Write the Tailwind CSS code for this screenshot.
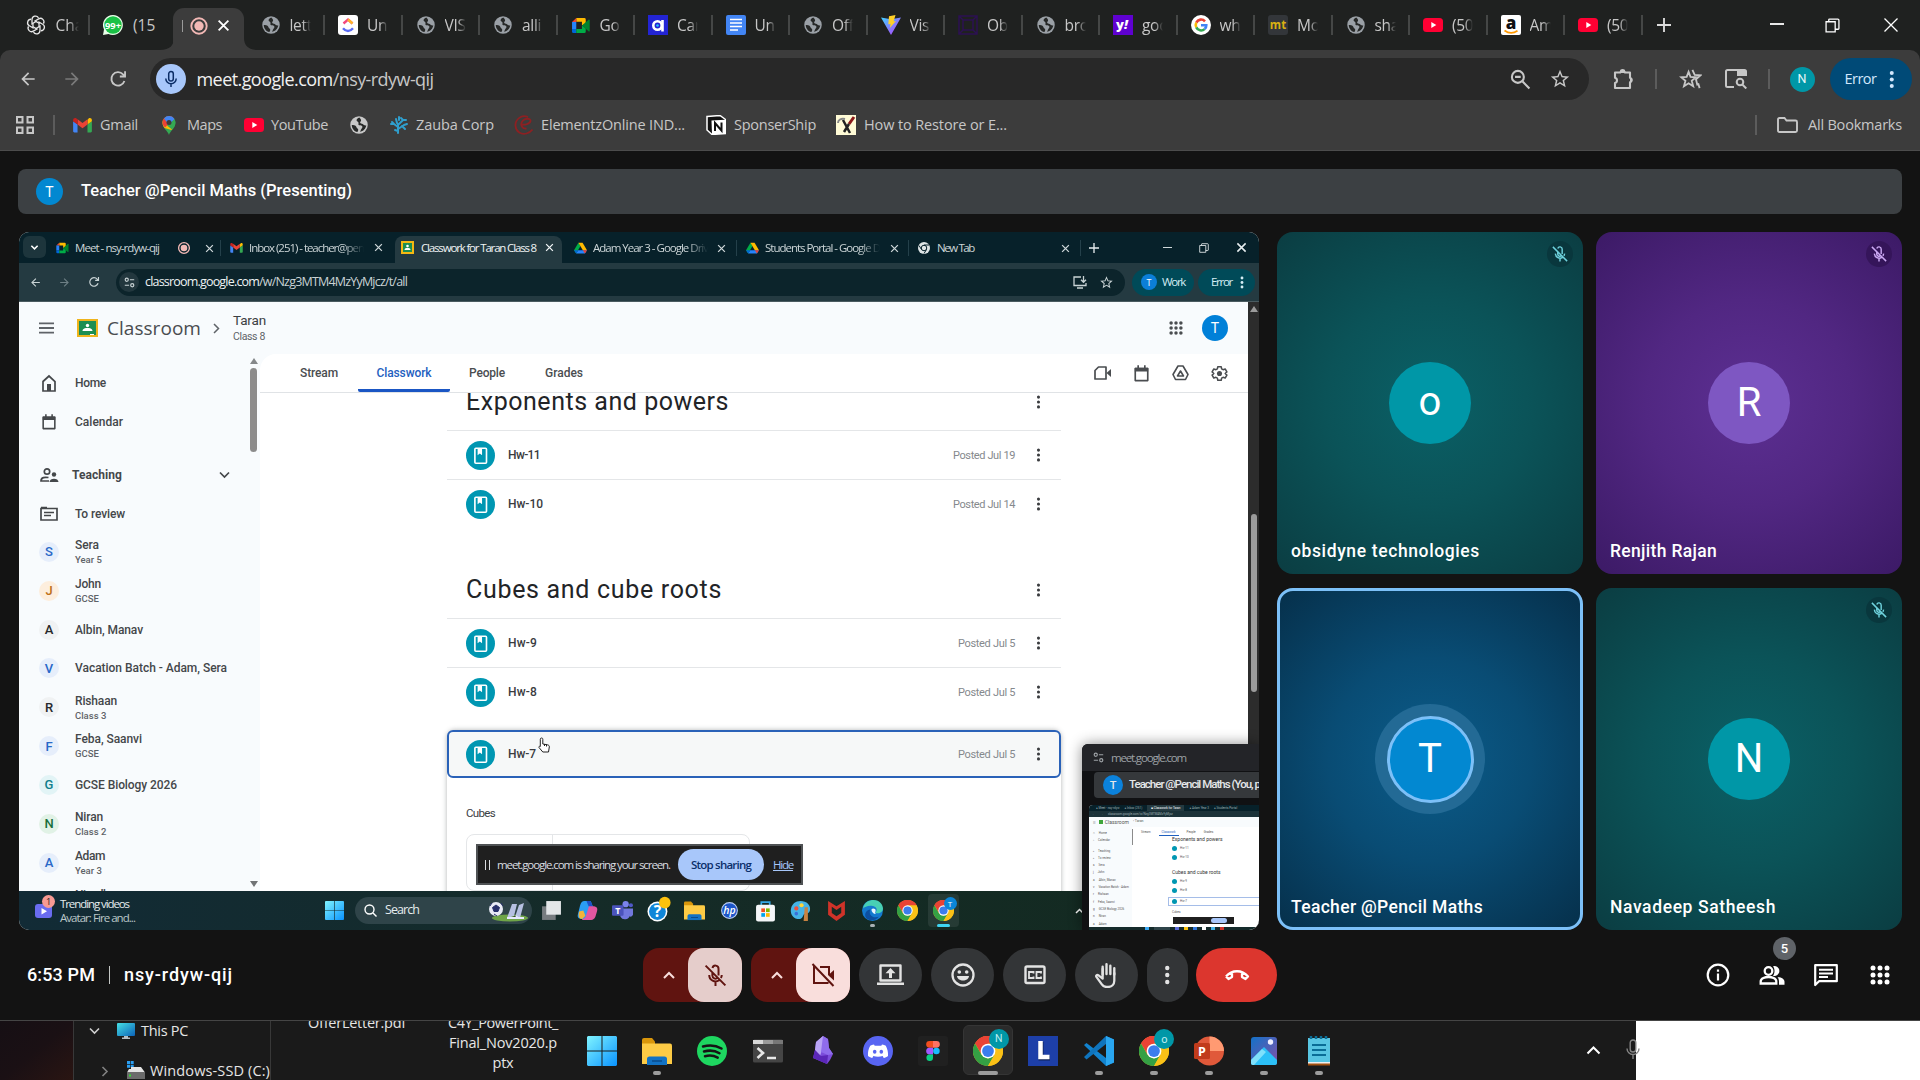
<!DOCTYPE html>
<html lang="en">
<head>
<meta charset="utf-8">
<title>Meet - nsy-rdyw-qij</title>
<script src="https://cdn.jsdelivr.net/npm/@tailwindcss/browser@4"></script>
</head>
<body class="w-[1920px] h-[1080px] overflow-hidden bg-[#131313] font-['Open_Sans','Noto_Sans',sans-serif] leading-none whitespace-nowrap">

<svg class="absolute w-0 h-0">
  <symbol id="globe" viewBox="0 0 24 24"><circle cx="12" cy="12" r="10.500" fill="currentColor"/><path d="M12.500 3c-2 .6-3.600 2-3.400 3.700.2 1.300 1.700 1.100 2.200 2.200.5 1.200-.5 2.300.4 3.100 1 .9 2.900.2 3.900 1.200 1.200 1.200.2 2.600-.8 3.500-.9.900-.7 2.400-1.800 3.500 4.200-.7 7.300-4 7.700-8-1.500.8-3-.3-4.300-1.300-1.200-.9-2.700-.3-3-1.600-.3-1.200 1.300-1.700 1.100-3C14.400 5 13.300 4.200 12.500 3zM3.300 12c1.500-.3 3.200-.2 4.500.8 1.300 1 1.100 2.500 2.400 3.300 1 .7 1.100 1.800.6 3.100l-.8 1.300C6.200 19.600 3.400 16.300 3.300 12z" fill="#262827"/></symbol>
  <symbol id="yt" viewBox="0 0 20 20"><rect y="3" width="20" height="14" rx="3.500" fill="#ff0033"/><path d="M8.300 7v6l5-3z" fill="#fff"/></symbol>
  <symbol id="gmail" viewBox="0 0 20 16"><path d="M1.300 15.500h3.400V7L0 3.500v10.700c0 .7.6 1.300 1.300 1.300z" fill="#4285f4"/><path d="M15.300 15.500h3.400c.7 0 1.300-.6 1.300-1.300V3.500L15.300 7z" fill="#34a853"/><path d="M15.300 2v5L20 3.500V2.200c0-1.900-2.100-2.700-3.500-1.600z" fill="#fbbc04"/><path d="M4.700 7V1.300L10 5.300l5.300-4V7L10 11z" fill="#ea4335"/><path d="M0 2.200v1.300L4.700 7V1.300L3.500.6C2.100-.5 0 .3 0 2.200z" fill="#c5221f"/></symbol>
  <symbol id="gmeet" viewBox="0 0 20 18"><path d="M5 1h8.500A1.500 1.500 0 0 1 15 2.500V7l-4 2V5H5z" fill="#ffba00"/><path d="M5 1v4.300H0.500z" fill="#ea4335"/><path d="M.5 5.300H5v7.400H.5z" fill="#2684fc"/><path d="M.5 12.700H5V17H2a1.500 1.500 0 0 1-1.500-1.500z" fill="#0066da"/><path d="M5 12.700h6V9l4 3v3.500a1.500 1.500 0 0 1-1.500 1.500H5z" fill="#00ac47"/><path d="M11 9l7-6.200c.6-.4 1.200 0 1.200.6v11.300c0 .6-.7.9-1.200.5z" fill="#00832d"/></symbol>
  <symbol id="drive" viewBox="0 0 22 20"><path d="M7.500 1 0 14l3.600 5.500L11 6.500z" fill="#00ac47"/><path d="M7.500 1h7L22 14h-7z" fill="#ffba00"/><path d="M3.600 19.500 7 13.800h15l-3.500 5.700z" fill="#2684fc"/><path d="M0 14h7l-3.400 5.500z" fill="#0066da"/><path d="M22 14h-7l3.500 5.500z" fill="#ea4335"/></symbol>
  <symbol id="chrome" viewBox="0 0 24 24"><circle cx="12" cy="12" r="12" fill="#fbc116"/><path d="M12 12 1.600 6A12 12 0 0 1 22.400 6z" fill="#ea4335"/><path d="M12 6h10.400A12 12 0 0 0 1.600 6L7 15z" fill="#ea4335"/><path d="M1.600 6A12 12 0 0 0 12 24l5.200-9L12 18 6.800 15z" fill="#34a044"/><path d="M22.400 6H12l5.200 9L12 24A12 12 0 0 0 22.400 6z" fill="#fbc116"/><circle cx="12" cy="12" r="5.900" fill="#fff"/><circle cx="12" cy="12" r="4.700" fill="#3b7ded"/></symbol>
  <symbol id="x" viewBox="0 0 12 12"><path d="M1.500 1.500l9 9M10.500 1.500l-9 9" fill="none" stroke="currentColor" stroke-width="1.700"/></symbol>
  <symbol id="plus" viewBox="0 0 12 12"><path d="M6 0v12M0 6h12" fill="none" stroke="currentColor" stroke-width="1.600"/></symbol>
  <symbol id="back" viewBox="0 0 24 24"><path d="M20 11H7.830l5.590-5.590L12 4l-8 8 8 8 1.410-1.410L7.830 13H20z" fill="currentColor"/></symbol>
  <symbol id="fwd" viewBox="0 0 24 24"><path d="M4 11h12.170l-5.590-5.590L12 4l8 8-8 8-1.410-1.410L16.170 13H4z" fill="currentColor"/></symbol>
  <symbol id="reload" viewBox="0 0 24 24"><path d="M19 14.200A7.300 7.300 0 1 1 17.500 7L19.500 9M19.700 3.500V9.300H14" fill="none" stroke="currentColor" stroke-width="2"/></symbol>
  <symbol id="star" viewBox="0 0 24 24"><path d="M22 9.240l-7.190-.62L12 2 9.190 8.630 2 9.240l5.460 4.730L5.820 21 12 17.270 18.180 21l-1.630-7.030L22 9.240zM12 15.400l-3.760 2.270 1-4.280-3.320-2.880 4.380-.38L12 6.100l1.710 4.040 4.380.38-3.320 2.880 1 4.280L12 15.400z" fill="currentColor"/></symbol>
  <symbol id="dots" viewBox="0 0 6 20"><g fill="currentColor"><circle cx="3" cy="3" r="2.200"/><circle cx="3" cy="10" r="2.200"/><circle cx="3" cy="17" r="2.200"/></g></symbol>
  <symbol id="grid9" viewBox="0 0 20 20"><g fill="currentColor"><circle cx="3" cy="3" r="2.500"/><circle cx="10" cy="3" r="2.500"/><circle cx="17" cy="3" r="2.500"/><circle cx="3" cy="10" r="2.500"/><circle cx="10" cy="10" r="2.500"/><circle cx="17" cy="10" r="2.500"/><circle cx="3" cy="17" r="2.500"/><circle cx="10" cy="17" r="2.500"/><circle cx="17" cy="17" r="2.500"/></g></symbol>
  <symbol id="rec" viewBox="0 0 20 20"><circle cx="10" cy="10" r="7.700" fill="none" stroke="#f2b8b5" stroke-width="1.900"/><circle cx="10" cy="10" r="4.700" fill="#f2b8b5"/></symbol>
  <symbol id="tune" viewBox="0 0 14 14"><g fill="none" stroke="currentColor" stroke-width="1.500"><circle cx="3.500" cy="3.500" r="2"/><path d="M7.500 3.500H13M1 10.500h5.500"/><circle cx="10.500" cy="10.500" r="2"/></g></symbol>
  <symbol id="cal" viewBox="0 0 18 20"><path d="M1.500 4h15v14.500h-15z" fill="none" stroke="currentColor" stroke-width="2" stroke-linejoin="round"/><path d="M1 3h16v4.500H1zM4 0h2v4H4zM12 0h2v4h-2z" fill="currentColor"/></symbol>
  <symbol id="book" viewBox="0 0 30 30"><circle cx="15" cy="15" r="15" fill="#0097b2"/><rect x="9.200" y="7.500" width="12" height="15.500" rx="1" fill="none" stroke="#fff" stroke-width="1.700"/><path d="M12 8v6.700l2.300-1.700 2.300 1.700V8z" fill="#fff"/></symbol>
  <linearGradient id="wg" x1="0" y1="0" x2="30" y2="30" gradientUnits="userSpaceOnUse"><stop stop-color="#80f4ff"/><stop offset="1" stop-color="#0a93ff"/></linearGradient>
  <symbol id="win" viewBox="0 0 30 30"><path d="M1 0h13.500v14.500H0V1zM15.500 0H29l1 1v13.500H15.500zM0 15.500h14.500V30H1l-1-1zM15.500 15.500H30V29l-1 1H15.500z" fill="url(#wg)"/></symbol>
  <symbol id="folder" viewBox="0 0 30 28"><path d="M0 3a2 2 0 0 1 2-2h8l3 3.500V9H0z" fill="#d9960b"/><path d="M0 6.500h28a2 2 0 0 1 2 2V27H0z" fill="#fdcb45"/><path d="M5 28v-6a2.500 2.500 0 0 1 2.500-2.500h15A2.500 2.500 0 0 1 25 22v6z" fill="#1272c4"/><path d="M10 24h10" stroke="#0a4c8c" stroke-width="1.500"/></symbol>
  <symbol id="micoff" viewBox="0 0 24 24"><g fill="none" stroke="currentColor" stroke-width="1.900"><path d="M9 9.500V12a3 3 0 0 0 5 2.200M14.900 12V5.500a2.950 2.950 0 0 0-5.800-.8M6 11.500a6 6 0 0 0 9.500 5M18 11.500a6 6 0 0 1-.8 3M12 17.700V22M2.500 2.500l19 19"/></g></symbol>
  <symbol id="restore" viewBox="0 0 14 14"><path d="M1 3.500h8.500V13H1zM3.500 3.500V1.700c0-.4.3-.7.7-.7H12c.6 0 1 .4 1 1v7.800c0 .4-.3.700-.7.700H9.500" fill="none" stroke="currentColor" stroke-width="1.200"/></symbol>
</svg>

<!-- Tab strip -->
<header class="bg-[#1f2120] h-[50px] flex text-[#c7c7c7] text-[15.500px]">
  <div class="flex flex-none w-[1642.500px] pl-[12.500px]" id="tabs">
    <div class="w-[77.500px] flex-none flex items-center pl-[13px] relative">
      <svg class="w-5 h-5 mr-[10px]" viewBox="0 0 20 20"><g fill="none" stroke="#e8e8e8" stroke-width="1.300"><path id="petal" d="M10 6.500 6 8.800V4.600a3.500 3.500 0 0 1 6.500-1.800"/><use href="#petal" transform="rotate(60 10 10)"/><use href="#petal" transform="rotate(120 10 10)"/><use href="#petal" transform="rotate(180 10 10)"/><use href="#petal" transform="rotate(240 10 10)"/><use href="#petal" transform="rotate(300 10 10)"/></g></svg>
      <span class="w-[23px] overflow-hidden leading-6 [mask-image:linear-gradient(90deg,#000_55%,transparent)]">Cha</span><i class="absolute right-0 top-[15px] w-0.5 h-5 bg-[#454746]"></i>
    </div>
    <div class="w-[77.500px] flex-none flex items-center pl-[13px]">
      <svg class="w-5 h-5 mr-[10px] overflow-visible" viewBox="0 0 20 20"><path d="M10 0a10 10 0 1 1-4.500 19L0 20l1-5.500A10 10 0 0 1 10 0z" fill="#e9ffe9"/><circle cx="10" cy="10" r="8.700" fill="#1ac146"/><text x="10" y="13.600" text-anchor="middle" font-size="9.500" font-weight="700" fill="#fff" textLength="16" lengthAdjust="spacingAndGlyphs">99+</text></svg>
      <span class="w-[24px] overflow-hidden leading-6">(15</span>
    </div>
    <div class="w-[80px] flex-none relative z-10">
      <div class="absolute left-[5.500px] top-2 w-[71px] h-[42px] bg-[#3c3c3c] rounded-t-[11px] flex items-center pb-1 pt-[1px] text-white">
        <i class="w-px h-3 bg-[#9a9a9a] ml-[9px] mt-[-3px]"></i><svg class="w-[20px] h-[20px] ml-[6px] mt-[-4px]"><use href="#rec"/></svg><svg class="w-[13px] h-[13px] ml-[8px] mt-[-4px]"><use href="#x"/></svg>
      </div>
      <svg class="absolute left-[-8px] bottom-0 w-[14px] h-3" viewBox="0 0 14 12"><path d="M0 12h14V0c0 7-4 12-14 12z" fill="#3c3c3c"/></svg>
      <svg class="absolute left-[76px] bottom-0 w-[14px] h-3" viewBox="0 0 14 12"><path d="M14 12H0V0c0 7 4 12 14 12z" fill="#3c3c3c"/></svg>
    </div>
  </div>
  <div class="flex items-center flex-1">
    <svg class="w-[14px] h-[14px] ml-[14px] text-[#dcdcdc]"><use href="#plus"/></svg>
    <i class="w-[14px] h-[1.500px] bg-[#e8e8e8] ml-[99px] -mt-[2px]"></i>
    <svg class="w-[15px] h-[15px] ml-[41px] text-white"><use href="#restore"/></svg>
    <svg class="ml-[44px] w-[14px] h-[14px] text-white" viewBox="0 0 14 14"><path d="M.5.5l13 13M13.500.5l-13 13" stroke="currentColor" stroke-width="1.300"/></svg>
  </div>
</header>

<!-- Toolbar -->
<div class="bg-[#1f2120]"><div class="bg-[#3c3c3c] h-[58px] flex items-center rounded-t-[10px] text-[#c7c7c7]">
  <svg class="w-5 h-5 ml-[18px]"><use href="#back"/></svg>
  <svg class="w-5 h-5 ml-[24px] text-[#7a7a7a]"><use href="#fwd"/></svg>
  <svg class="w-[22px] h-[22px] ml-[25px]"><use href="#reload"/></svg>
  <div class="ml-[20.500px] w-[1439px] h-[42px] rounded-full bg-[#282828] flex items-center pl-[6px] flex-none">
    <span class="w-[30px] h-[30px] rounded-full bg-[#a8c7fa] flex items-center justify-center"><svg class="w-[18px] h-[18px]" viewBox="0 0 18 18"><g fill="none" stroke="#0b2d66" stroke-width="1.500"><rect x="6.700" y="1.500" width="4.600" height="9.500" rx="2.300"/><path d="M3.800 8.500a5.200 5.200 0 0 0 10.400 0M9 13.500V17"/></g></svg></span>
    <span class="ml-[11px] text-[18px] text-[#c7c7c7]" data-w="237"><b class="font-normal text-[#f1f1f1]">meet.google.com</b>/nsy-rdyw-qij</span>
    <svg class="ml-auto w-[21px] h-[21px]" viewBox="0 0 20 20"><g fill="none" stroke="#c7c7c7" stroke-width="2"><circle cx="7.500" cy="7.500" r="5.700"/><path d="M12 12l6.500 6.500M4.800 7.500h5.400" /></g></svg>
    <svg class="w-[22px] h-[22px] ml-[18px] mr-[17.500px]"><use href="#star"/></svg>
  </div>
  <svg class="w-6 h-6 ml-[22px]" viewBox="0 0 24 24"><path d="M4 5.500h5.200a2.600 2.600 0 0 1 4.800 0h5v5.200a2.400 2.400 0 0 1 0 4.600v5.700H4v-5a2.700 2.700 0 0 0 0-5.200z" fill="none" stroke="currentColor" stroke-width="2.100" stroke-linejoin="round"/><path d="M9 4a2.600 2 0 0 1 5.200 0v2H9zM19 10.300a2.500 2.500 0 0 1 2.300 2.700 2.500 2.500 0 0 1-2.300 2.700z" fill="currentColor"/></svg>
  <i class="w-0.5 h-5 bg-[#5c5c5c] ml-[20px]"></i>
  <svg class="w-[23px] h-[23px] ml-[22px]" viewBox="0 0 24 24"><path d="M10 4l2 5.300 5.600.4-4.300 3.600 1.500 5.700L10 16l-4.800 3 1.500-5.700L2.400 9.700 8 9.300z" fill="none" stroke="currentColor" stroke-width="1.900"/><path d="M14 2l2.400 5.300 6 .4-4.700 4 1.600 6.600" fill="none" stroke="currentColor" stroke-width="1.900"/><path d="M20 16l1.500 5" stroke="currentColor" stroke-width="1.900"/></svg>
  <svg class="w-[22px] h-5 ml-[23px]" viewBox="0 0 22 20"><path d="M9 18H2.500A1.500 1.500 0 0 1 1 16.500v-14A1.500 1.500 0 0 1 2.500 1h17A1.500 1.500 0 0 1 21 2.500V7" fill="none" stroke="currentColor" stroke-width="2"/><path d="M12 1h9v6h-9z" fill="currentColor"/><circle cx="15" cy="13" r="3.300" fill="none" stroke="currentColor" stroke-width="2"/><path d="M17.300 15.500l4 4" stroke="currentColor" stroke-width="2"/></svg>
  <i class="w-0.5 h-5 bg-[#5c5c5c] ml-[21px]"></i>
  <span class="w-[25px] h-[25px] rounded-full bg-[#0097a7] text-[#e6f7f8] text-[12.500px] font-['Roboto'] flex items-center justify-center ml-[20px]">N</span>
  <div class="ml-[15px] w-[82px] h-[42px] rounded-full bg-[#004a77] text-[#d3e8fd] flex items-center pl-[15px] text-[14.500px]"><span data-w="32">Error</span><svg class="w-[5.500px] h-[19px] ml-[12.500px]"><use href="#dots"/></svg></div>
</div></div>

<!-- Bookmarks bar -->
<div class="bg-[#3c3c3c] h-[43px] pb-2 border-b border-[#4c4c4c] flex items-center text-[#c7c7c7] text-[14.500px]">
  <svg class="w-[18px] h-[18px] ml-[15.500px]" viewBox="0 0 18 18"><path d="M1 1h5.500v5.500H1zM11.500 1H17v5.500h-5.500zM1 11.500h5.500V17H1zM11.500 11.500H17V17h-5.500z" fill="none" stroke="currentColor" stroke-width="2"/></svg>
  <i class="w-0.5 h-5 bg-[#5c5c5c] ml-[19px] mr-[18.500px]"></i>
  <div class="w-[86px] flex items-center"><svg class="w-[19px] h-[15px] mr-2"><use href="#gmail"/></svg><span data-w="38">Gmail</span></div>
  <div class="w-[85px] flex items-center"><svg class="w-5 h-5 mr-2" viewBox="0 0 20 20"><path d="M10 20c-1-4-6.500-6.500-6.500-12.500A6.500 6.500 0 0 1 16.500 7.500C16.500 13.500 11 16 10 20z" fill="#34a853"/><path d="M5.500 13C4 11 3.500 9.500 3.500 7.500c0-1 .2-2 .7-3L14 12.500l-1.500 2.500z" fill="#fbbc04"/><path d="M3.500 7.500A6.500 6.500 0 0 1 15 3.500l-9 9C4.500 11 3.500 9.500 3.500 7.500z" fill="#ea4335"/><path d="M5 3.500A6.500 6.500 0 0 1 15.500 4L10 10z" fill="#4285f4"/><path d="M15.500 4.500c2.200 4.500-.5 7.500-2.500 10l-5 -4z" fill="#34a853"/><circle cx="10" cy="7.500" r="2.500" fill="#3c3c3c"/></svg><span data-w="35">Maps</span></div>
  <div class="w-[105px] flex items-center"><svg class="w-5 h-5 mr-[7px]"><use href="#yt"/></svg><span data-w="57">YouTube</span></div>
  <div class="w-[40px]"><svg class="w-5 h-5"><use href="#globe"/></svg></div>
  <div class="w-[125px] flex items-center"><svg class="w-5 h-5 mr-[7px]" viewBox="0 0 20 20"><path d="M9 18V9M9 12L5 9M9 14l6-4M10 9l4-4M8 8L7 4M5 9l-2-2M14 5l-2-2M15 10l3-1M6 15l3 1M5 9H2M14 5h3M10 5V2M13 11l3 3" stroke="#2f9fce" stroke-width="2" stroke-linecap="round" fill="none"/></svg><span data-w="78">Zauba Corp</span></div>
  <div class="w-[192px] flex items-center"><svg class="w-5 h-5 mr-[7px]" viewBox="0 0 20 20"><path d="M14 2C7-1 1 5 1.500 11c.5 6 6 9 11 7.500 2.500-.7 4.500-2 6-4M7 9.500c4 .5 9-.5 9.500-3.500.3-3-6-3-8 0-3 4 0 8 4 7.500" stroke="#8d2022" stroke-width="1.800" fill="none"/></svg><span data-w="144">ElementzOnline IND...</span></div>
  <div class="w-[130px] flex items-center"><svg class="w-5 h-5 mr-2" viewBox="0 0 20 20"><path d="M1 1.500 14 .5l5.500 4v14L6 19.500 1 15z" fill="#111" stroke="#fff" stroke-width="1.500"/><path d="M5.500 5.500 19 4.700v14L6 19.300z" fill="#fff"/><path d="M9 16V8l6.500 7.500V7.500" stroke="#111" stroke-width="2" fill="none"/></svg><span data-w="82">SponserShip</span></div>
  <div class="flex items-center"><svg class="w-5 h-5 mr-2" viewBox="0 0 20 20"><path d="M0 0h20v20H0z" fill="#fffbd6"/><path d="M18 2l-5 7" stroke="#8b1a1a" stroke-width="3"/><path d="M13 9l-5 8M7 5l7 13" stroke="#222" stroke-width="2.500"/><path d="M2 8c0-3 3-5 7-4" stroke="#888" stroke-width="2" fill="none"/></svg><span data-w="143">How to Restore or E...</span></div>
  <i class="w-0.5 h-5 bg-[#5c5c5c] ml-auto"></i>
  <svg class="w-[21px] h-4 ml-[20px] mr-[10px]" viewBox="0 0 21 16"><path d="M1 13.500v-11C1 1.500 1.500 1 2.500 1h5l2 2.500h9c1 0 1.500.5 1.500 1.500v8.500c0 1-.5 1.500-1.500 1.500h-16C1.500 15 1 14.500 1 13.500z" fill="none" stroke="currentColor" stroke-width="1.900"/></svg>
  <span data-w="94" class="mr-[18px]">All Bookmarks</span>
</div>

<!-- Meet -->
<main class="px-[18px] pt-[18px] h-[779px] font-['Roboto','Noto_Sans',sans-serif]">
  <div class="h-[45px] rounded-lg bg-[#3c4043] flex items-center pl-[18px] text-white font-medium text-[16.500px]">
    <span class="w-[27px] h-[27px] rounded-full bg-[#0288d1] flex items-center justify-center font-normal text-sm">T</span>
    <span class="ml-[18px]" data-w="271">Teacher @Pencil Maths (Presenting)</span>
  </div>

  <div class="mt-[18px] ml-px h-[698px] flex gap-[18px]">
    <!-- Shared screen -->
    <section class="relative w-[1240px] flex-none rounded-[10px] overflow-hidden bg-white flex flex-col font-['Open_Sans','Noto_Sans',sans-serif]">
      <div class="h-[31px] bg-[#07212a] flex text-[11.500px] text-[#ccd5d7] flex-none">
        <span class="w-[23px] h-[22px] mt-1 ml-1 rounded-md bg-[#1d353c] flex items-center justify-center"><svg class="w-[9px] h-[9px]" viewBox="0 0 10 10"><path d="M1.500 3l3.500 3.500L8.500 3" fill="none" stroke="#fff" stroke-width="1.700"/></svg></span>
        <div class="w-[175px] flex items-center pl-[10px] border-r border-[#24404a] h-4 mt-2"><svg class="w-[13px] h-[12px]"><use href="#gmeet"/></svg><span class="ml-[6px]" data-w="84">Meet - nsy-rdyw-qij</span><svg class="w-[14px] h-[14px] ml-[18px]"><use href="#rec"/></svg><svg class="w-[9px] h-[9px] ml-[14px]"><use href="#x"/></svg></div>
        <div class="w-[174px] flex items-center pl-[9px]"><svg class="w-[13px] h-[10px]"><use href="#gmail"/></svg><span class="ml-[6px] w-[115px] overflow-hidden leading-5 [mask-image:linear-gradient(90deg,#000_82%,transparent)]"><b class="font-normal inline-block" data-w="115">Inbox (251) - teacher@pen</b></span><svg class="w-[9px] h-[9px] ml-[10px]"><use href="#x"/></svg></div>
        <div class="w-[167px] bg-[#243a41] mt-1 rounded-t-lg flex items-center pl-[6px] pb-1 text-[#f0f4f5]"><svg class="w-[13px] h-[13px] flex-none" viewBox="0 0 13 13"><path d="M0 0h13v13H0z" fill="#f5b912"/><path d="M2 2h9v9H2z" fill="#1d8e51"/><circle cx="6.500" cy="5" r="1.300" fill="#fff"/><path d="M3.500 9c0-3 6-3 6 0z" fill="#fff"/></svg><span class="ml-[7px]" data-w="115">Classwork for Taran Class 8</span><svg class="w-[9px] h-[9px] ml-[9px]"><use href="#x"/></svg></div>
        <div class="w-[175px] flex items-center pl-[12px] border-r border-[#24404a] h-4 mt-2"><svg class="w-[13px] h-[12px]"><use href="#drive"/></svg><span class="ml-[6px] w-[115px] overflow-hidden leading-5 [mask-image:linear-gradient(90deg,#000_82%,transparent)]"><b class="font-normal inline-block" data-w="115">Adam Year 3 - Google Driv</b></span><svg class="w-[9px] h-[9px] ml-[9px]"><use href="#x"/></svg></div>
        <div class="w-[172px] flex items-center pl-[9px] border-r border-[#24404a] h-4 mt-2"><svg class="w-[13px] h-[12px]"><use href="#drive"/></svg><span class="ml-[6px] w-[115px] overflow-hidden leading-5 [mask-image:linear-gradient(90deg,#000_82%,transparent)]"><b class="font-normal inline-block" data-w="115">Students Portal - Google D</b></span><svg class="w-[9px] h-[9px] ml-[10px]"><use href="#x"/></svg></div>
        <div class="w-[172px] flex items-center pl-[9px] border-r border-[#24404a] h-4 mt-2"><svg class="w-[12px] h-[12px]" viewBox="0 0 24 24"><circle cx="12" cy="12" r="12" fill="#dfe5e6"/><circle cx="12" cy="12" r="5.500" fill="#dfe5e6" stroke="#07212a" stroke-width="2"/><path d="M12 6h10M7 15L2 7M17 15l-5 8" stroke="#07212a" stroke-width="2"/></svg><span class="ml-[7px]" data-w="37">New Tab</span><svg class="w-[9px] h-[9px] ml-[87px]"><use href="#x"/></svg></div>
        <div class="flex items-center text-[#e6ecee]"><svg class="w-[10px] h-[10px] ml-[8px]"><use href="#plus"/></svg><i class="w-[9px] h-px bg-[#cfd8da] ml-[64px]"></i><svg class="w-[10px] h-[10px] ml-[27px]"><use href="#restore"/></svg><svg class="w-[11px] h-[11px] ml-[27px]"><use href="#x"/></svg></div>
      </div>
      <div class="h-[39px] bg-[#243a41] border-b border-[#4a5b60] flex items-center text-[#c9d3d5] flex-none">
        <svg class="w-[13px] h-[13px] ml-[10px]"><use href="#back"/></svg><svg class="w-[13px] h-[13px] ml-[16px] text-[#6e8086]"><use href="#fwd"/></svg><svg class="w-[14px] h-[14px] ml-[16px]"><use href="#reload"/></svg>
        <div class="ml-[15px] w-[1009px] h-[27px] bg-[#0c242b] rounded-full flex items-center flex-none pl-[3px]"><span class="w-5 h-5 rounded-full bg-[#22373e] flex items-center justify-center"><svg class="w-[11px] h-[11px]"><use href="#tune"/></svg></span><span class="ml-[6px] text-[12.500px]" data-w="262"><b class="font-normal text-[#eef3f4]">classroom.google.com</b>/w/Nzg3MTM4MzYyMjcz/t/all</span>
          <svg class="ml-auto w-[14px] h-[13px]" viewBox="0 0 14 13"><path d="M8 1H1v8.500h12V7M4 12h6M10.500 0v6M8 3.800l2.500 2.500L13 3.800" fill="none" stroke="currentColor" stroke-width="1.300"/></svg><svg class="w-[15px] h-[15px] ml-[12px] mr-[11px]"><use href="#star"/></svg></div>
        <div class="ml-[7px] w-[62px] h-[27px] rounded-full bg-[#004a58] flex items-center pl-[9px] text-[11.500px] text-[#d5eef5]"><span class="w-4 h-4 rounded-full bg-[#0b7fd8] text-white text-[9px] flex items-center justify-center mr-[5px]">T</span><span data-w="23">Work</span></div>
        <div class="ml-[4px] w-[57px] h-[27px] rounded-full bg-[#004a58] flex items-center pl-[13px] text-[11.500px] text-[#d5eef5]"><span data-w="21">Error</span><svg class="w-[4px] h-[13px] ml-[8px]"><use href="#dots"/></svg></div>
      </div>

      <!-- Classroom page -->
      <div class="h-[589px] flex flex-none font-['Roboto','Noto_Sans',sans-serif] text-[#3c4043]">
        <div class="w-[1229px] bg-[#f8fbfd] overflow-hidden">
          <div class="h-[52px] flex items-center text-[#4a4d50]">
            <svg class="w-[15px] h-[12px] ml-[20px]" viewBox="0 0 15 12"><path d="M0 1.300h15M0 6h15M0 10.700h15" stroke="#5f6368" stroke-width="1.800"/></svg>
            <svg class="w-[21px] h-[18px] ml-[23px]" viewBox="0 0 21 18"><path d="M0 0h21v18H0z" fill="#efb41d"/><path d="M2 2h17v14H2z" fill="#1d8e51"/><circle cx="10.500" cy="6.500" r="1.700" fill="#fff"/><path d="M5.500 12c0-2.500 3-3 5-3s5 .5 5 3zM13 15h4v1h-4z" fill="#fff"/></svg>
            <span class="text-[19px] ml-[9px] font-['Open_Sans']" data-w="94">Classroom</span>
            <svg class="w-[7px] h-[11px] ml-[12px]" viewBox="0 0 7 11"><path d="M1 1l4.500 4.500L1 10" fill="none" stroke="#5f6368" stroke-width="1.500"/></svg>
            <div class="ml-[13px] flex flex-col gap-[5px]"><span class="text-[13.500px] text-[#3c4043] w-max" data-w="33">Taran</span><span class="text-[10.500px] text-[#5f6368] w-max" data-w="32">Class 8</span></div>
            <svg class="w-[14px] h-[14px] ml-auto text-[#4a4d50]"><use href="#grid9"/></svg><span class="ml-[19px] mr-[20px] w-[26px] h-[26px] rounded-full bg-[#0080d8] text-white text-[14px] flex items-center justify-center">T</span>
          </div>
          <div class="flex h-[537px]">
            <nav class="w-[228px] h-[537px] overflow-hidden pt-[9.500px] text-[12px] font-medium text-[#44474a]">
              <div class="h-[39px] flex items-center pl-[20px]"><svg class="w-5 h-[18px]" viewBox="0 0 20 18"><path d="M4 7.500 10 2l6 5.500V17H4z" fill="none" stroke="currentColor" stroke-width="1.700"/><path d="M8 10h4v7H8z" fill="currentColor"/></svg><span class="ml-4" data-w="31">Home</span></div>
              <div class="h-[39px] flex items-center pl-[23px]"><svg class="w-[14px] h-4"><use href="#cal"/></svg><span class="ml-[19px]" data-w="48">Calendar</span></div>
              <div class="h-[39px] mt-[14px] flex items-center pl-[20px]"><svg class="w-5 h-4" viewBox="0 0 20 16"><circle cx="8" cy="4.500" r="2.700" fill="none" stroke="currentColor" stroke-width="1.700"/><circle cx="15" cy="7.500" r="2.200" fill="currentColor"/><path d="M10 14H2c0-4 4-4 7.500-3.500" fill="none" stroke="currentColor" stroke-width="1.700"/><path d="M10.500 15c0-4.500 9-4.500 9 0z" fill="currentColor"/></svg><span class="ml-[13px] font-bold" data-w="50">Teaching</span><svg class="w-[11px] h-[8px] ml-[97px]" viewBox="0 0 11 8"><path d="M1 1.500l4.500 4.500L10 1.500" fill="none" stroke="currentColor" stroke-width="1.700"/></svg></div>
              <div class="h-[38px] flex items-center pl-[21px]"><svg class="w-[18px] h-[15px]" viewBox="0 0 18 15"><path d="M1 2.500h16V14H1zM1 1.500h6M4 6.500h10M4 9.500h7" fill="none" stroke="currentColor" stroke-width="1.700"/></svg><span class="ml-[17px]" data-w="50">To review</span></div>
              <div id="classes"></div>
            </nav>
            <div class="w-[13px] flex flex-col items-center py-[4px]"><svg class="w-[8px] h-[6px]" viewBox="0 0 8 6"><path d="M0 6l4-6 4 6z" fill="#85888a"/></svg><i class="w-[7px] h-[84px] mt-[4px] rounded-full bg-[#8b8b8b]"></i><svg class="w-[8px] h-[6px] mt-auto" viewBox="0 0 8 6"><path d="M0 0l4 6 4-6z" fill="#707375"/></svg></div>
            <div class="w-[988px] h-[537px] bg-white rounded-tl-[16px] overflow-hidden">
              <div class="h-[39px] border-b border-[#e0e3e6] flex text-[12px] font-medium text-[#4a4d50] relative">
                <div class="pl-[40px] w-[98px] flex items-center"><span data-w="38">Stream</span></div>
                <div class="w-[92px] flex items-center justify-center text-[#1f5fbf] border-b-[3px] border-[#1a56c4] pt-[3px] rounded-b-[2px]"><span data-w="55">Classwork</span></div>
                <div class="pl-[19px] w-[95px] flex items-center"><span data-w="36">People</span></div>
                <div class="flex items-center"><span data-w="38">Grades</span></div>
                <div class="ml-auto flex items-center text-[#4a4d50]">
                  <svg class="w-[17px] h-[14px]" viewBox="0 0 17 14"><path d="M4.500 1H12v12H1V4.500z" fill="none" stroke="currentColor" stroke-width="1.700" stroke-linejoin="round"/><path d="M12.500 7 17 3v8z" fill="currentColor"/></svg>
                  <svg class="w-[15px] h-[17px] ml-[23px]"><use href="#cal"/></svg>
                  <svg class="w-[17px] h-[16px] ml-[23px]" viewBox="0 0 17 16"><path d="M6 1h5l5 8.500-2.500 5h-10L1 9.500zM8.500 6l3 5h-6z" fill="none" stroke="currentColor" stroke-width="1.600" stroke-linejoin="round"/></svg>
                  <svg class="w-[17px] h-[17px] ml-[22px] mr-[20px]" viewBox="0 0 18 18"><path d="M7 1h4l.5 2.500 1.700 1L15.700 3.700l2 3.400-2 1.900 2 1.900-2 3.400-2.500-.8-1.700 1L11 17H7l-.5-2.500-1.700-1-2.500.8-2-3.400 2-1.900-2-1.900 2-3.400 2.500.8 1.700-1z" transform="translate(.9 .9) scale(.9)" fill="none" stroke="currentColor" stroke-width="1.800" stroke-linejoin="round"/><circle cx="9" cy="9" r="2.700" fill="currentColor"/></svg>
                </div>
              </div>
              <div class="h-[498px] overflow-hidden">
                <div class="w-[614px] ml-[187px] -mt-[20px] text-[12px] font-medium">
                  <div class="h-[58px] border-b border-[#e4e6e8] flex items-center pl-[19px] pr-[20px] justify-between text-[#3a3c3f]"><span class="text-[25px] font-normal text-[#222427]" data-w="263">Exponents and powers</span><svg class="w-[5px] h-[14px]"><use href="#dots"/></svg></div>
                  <div class="h-[49px] border-b border-[#e4e6e8] flex items-center pl-[19px] pr-[20px] text-[#3a3c3f]"><svg class="w-[29px] h-[29px]"><use href="#book"/></svg><span class="ml-[13px]" data-w="32">Hw-11</span><span class="ml-auto font-normal text-[11px] text-[#85898d]" data-w="62">Posted Jul 19</span><svg class="w-[5px] h-[14px] ml-[21px]"><use href="#dots"/></svg></div>
                  <div class="h-[48px] flex items-center pl-[19px] pr-[20px] text-[#3a3c3f]"><svg class="w-[29px] h-[29px]"><use href="#book"/></svg><span class="ml-[13px]" data-w="35">Hw-10</span><span class="ml-auto font-normal text-[11px] text-[#85898d]" data-w="62">Posted Jul 14</span><svg class="w-[5px] h-[14px] ml-[21px]"><use href="#dots"/></svg></div>
                  <div class="h-[58px] mt-[33px] border-b border-[#e4e6e8] flex items-center pl-[19px] pr-[20px] justify-between text-[#3a3c3f]"><span class="text-[25px] font-normal text-[#222427]" data-w="256">Cubes and cube roots</span><svg class="w-[5px] h-[14px]"><use href="#dots"/></svg></div>
                  <div class="h-[49px] border-b border-[#e4e6e8] flex items-center pl-[19px] pr-[20px] text-[#3a3c3f]"><svg class="w-[29px] h-[29px]"><use href="#book"/></svg><span class="ml-[13px]" data-w="29">Hw-9</span><span class="ml-auto font-normal text-[11px] text-[#85898d]" data-w="57">Posted Jul 5</span><svg class="w-[5px] h-[14px] ml-[21px]"><use href="#dots"/></svg></div>
                  <div class="h-[48px] flex items-center pl-[19px] pr-[20px] text-[#3a3c3f]"><svg class="w-[29px] h-[29px]"><use href="#book"/></svg><span class="ml-[13px]" data-w="29">Hw-8</span><span class="ml-auto font-normal text-[11px] text-[#85898d]" data-w="57">Posted Jul 5</span><svg class="w-[5px] h-[14px] ml-[21px]"><use href="#dots"/></svg></div>
                  <div class="mt-[14px] h-[200px] rounded-lg shadow-[0_0_5px_rgba(60,64,67,0.4)]">
                    <div class="h-[48px] rounded-md border-2 border-[#2a62b8] bg-[#f6f8f8] flex items-center pl-[17px] pr-[18px] text-[#3a3c3f]"><svg class="w-[29px] h-[29px]"><use href="#book"/></svg><span class="ml-[13px]" data-w="28">Hw-7</span><span class="ml-auto font-normal text-[11px] text-[#85898d]" data-w="57">Posted Jul 5</span><svg class="w-[5px] h-[14px] ml-[21px]"><use href="#dots"/></svg></div>
                    <div class="pl-[19px] pt-[27px] leading-4 font-normal text-[11.500px]"><span data-w="29" class="inline-block">Cubes</span><div class="mt-[13px] w-[284px] h-[57px] rounded-lg border border-[#e4e6e8]"><i class="block ml-[85px] h-full w-px bg-[#e4e6e8]"></i></div></div>
                  </div>
                </div>
              </div>
            </div>
          </div>
        </div>
        <div class="w-[11px] bg-[#2c2c2c] flex flex-col items-center"><svg class="w-[8px] h-[6px] mt-[4px]" viewBox="0 0 8 6"><path d="M0 6l4-6 4 6z" fill="#9b9b9b"/></svg><i class="mt-[202px] w-[6px] h-[178px] rounded-full bg-[#9b9b9b]"></i></div>
      </div>

      <!-- Pointer -->
      <svg class="absolute left-[519px] top-[505px] w-[12px] h-[16px]" viewBox="0 0 12 16"><path d="M3.500 1c1 0 1.300.6 1.300 1.300V7l4.700.8c1.300.3 2 1 1.800 2.200L10.500 15H4.800L1 10.500c-.5-.8.5-1.600 1.300-1V2.300C2.300 1.600 2.700 1 3.500 1zM6.500 7v2M8.500 7.500v2" fill="#fff" stroke="#222" stroke-width="1"/></svg>

      <!-- Sharing notice -->
      <div class="absolute left-[457px] top-[612px] w-[327px] h-[41px] bg-[#1f1f1f] border-2 border-[#4f5254] flex items-center text-[11.500px] text-[#dadde0]">
        <i class="ml-[7px] w-[5px] h-[10px] border-x-[1.500px] border-[#dadde0]"></i>
        <span class="ml-[7px]" data-w="173">meet.google.com is sharing your screen.</span>
        <span class="ml-[8px] w-[86px] h-[31px] rounded-full bg-[#a8c7fa] text-[#0b2f6b] flex items-center justify-center font-semibold"><b class="font-semibold" data-w="60">Stop sharing</b></span>
        <span class="ml-[9px] underline text-[#a8c7fa]" data-w="20">Hide</span>
      </div>

      <!-- Shared taskbar -->
      <div class="h-[39px] flex-none bg-linear-to-r from-[#122b36] via-[#152b27] to-[#132a20] flex items-center text-[11.500px] text-[#e6ecee]">
        <div class="w-[22px] ml-[16px] relative"><svg class="w-[17px] h-[14px]" viewBox="0 0 17 14"><rect width="17" height="14" rx="3" fill="#6a6cf0"/><path d="M6.500 4v6.500L12 7.200z" fill="#fff"/></svg><span class="absolute left-[7px] -top-[9px] w-[13px] h-[13px] rounded-full bg-[#f79a93] text-[9px] text-[#222] flex items-center justify-center">1</span></div>
        <div class="ml-[3px] w-[260px] flex flex-col gap-[2px]"><span class="w-max" data-w="69">Trending videos</span><span class="w-max text-[#bcc7c9]" data-w="75">Avatar: Fire and...</span></div>
        <svg class="w-[19px] h-[19px] ml-[5px]"><use href="#win"/></svg>
        <div class="ml-[11px] w-[177px] h-[27px] rounded-full bg-[#2f4449] flex items-center pl-[9px] text-[12.500px]"><svg class="w-[13px] h-[13px]" viewBox="0 0 13 13"><circle cx="5.500" cy="5.500" r="4.500" fill="none" stroke="#fff" stroke-width="1.400"/><path d="M9 9l3.500 3.500" stroke="#fff" stroke-width="1.400"/></svg><span class="ml-[8px]" data-w="34">Search</span>
          <svg class="ml-auto mr-[4px] w-[40px] h-[22px]" viewBox="0 0 40 22"><ellipse cx="22" cy="18" rx="18" ry="3.500" fill="#6fa548"/><circle cx="8" cy="9" r="7" fill="#e8eaf6"/><path d="M8 5l3.500 2.500-1.500 4H6L4.500 7.500zM2 6l2-3M13 3l2 3M6 14l3 2" fill="#27306b" stroke="#27306b"/><path d="M19 18l5-14 5 0-3 12zM27 17l4-12 5-2-4 15z" fill="#b7c0e2"/><path d="M19 18h9l1-2M28 18h8" stroke="#e7eaff" stroke-width="2"/></svg></div>
        <div class="ml-[2px] flex items-center [&>div]:w-[35.600px] [&>div]:h-[39px] [&>div]:flex [&>div]:items-center [&>div]:justify-center [&_svg]:w-[21px] [&_svg]:h-[21px] [&_svg]:overflow-visible">
          <div><svg viewBox="0 0 20 20"><path d="M1 6h13v13H1z" fill="#777c80"/><path d="M5 1h14v13H5z" fill="#e3e6e8"/></svg></div>
          <div><svg viewBox="0 0 20 20"><path d="M7 1h6l2 5-4 12H5c-4 0-5-2-4-5l2-8c1-3 2-4 4-4z" fill="#2a9df4"/><path d="M5 18c2 0 3-1 3.500-3L12 4l3 2c4 0 5 2 4 5l-1.500 5c-1 2-2 3-4 3H5z" fill="#e356a0"/><path d="M2 11l4-1 2 5-3 3c-3 0-4-2-3-7z" fill="#f3b33a"/><path d="M9 1l4 0 2 5h-4z" fill="#1e50c8"/></svg></div>
          <div><svg viewBox="0 0 20 20"><circle cx="13" cy="4" r="3" fill="#7b83eb"/><circle cx="18" cy="5" r="2" fill="#5059c9"/><path d="M8 8h9v7a5 5 0 0 1-9 1zM17 8h3v6a3 3 0 0 1-3 2z" fill="#7178dd"/><rect y="5" width="11" height="10" rx="1" fill="#4b53bc"/><text x="5.500" y="13" text-anchor="middle" font-size="8.500" font-weight="700" fill="#fff">T</text></svg></div>
          <div><svg viewBox="0 0 20 20"><circle cx="9" cy="11" r="9.500" fill="#fff"/><circle cx="9" cy="11" r="8" fill="#0f86d8"/><text x="9" y="16.500" text-anchor="middle" font-size="15" font-weight="700" fill="#fff">?</text><circle cx="16" cy="2.500" r="5.500" fill="#fcc20e"/></svg></div>
          <div><svg viewBox="0 0 30 28"><use href="#folder"/></svg></div>
          <div><svg viewBox="0 0 20 20"><circle cx="10" cy="10" r="7.500" fill="#1c55c8" stroke="#b9cdf5"/><text x="10" y="13.500" text-anchor="middle" font-size="10" font-style="italic" font-weight="600" fill="#fff">hp</text></svg></div>
          <div><svg viewBox="0 0 20 20"><path d="M6 5V2h8v3" fill="none" stroke="#33a8e8" stroke-width="1.600"/><rect x="1" y="4.500" width="18" height="16" rx="2" fill="#f4f6f8"/><path d="M6 8h3.500v3.500H6z" fill="#f25022"/><path d="M10.500 8H14v3.500h-3.500z" fill="#7fba00"/><path d="M6 12.500h3.500V16H6z" fill="#00a4ef"/><path d="M10.500 12.500H14V16h-3.500z" fill="#ffb900"/></svg></div>
          <div><svg viewBox="0 0 20 20"><path d="M10 1c6 0 10 4 9 9-1 4-5 2-6 4s-2 5-6 4C2 17 0 12 1 8s4-7 9-7z" fill="#45b3e6"/><circle cx="6" cy="8" r="2" fill="#f04f3c"/><circle cx="11" cy="5" r="2" fill="#fcd43a"/><circle cx="6" cy="13" r="1.700" fill="#3a6fd8"/><path d="M13 20l1-13h3v13z" fill="#c98241"/></svg></div>
          <div><svg viewBox="0 0 20 20"><path d="M2 1l8 5 8-5v13l-8 6-8-6zM5.500 6.500v5.800L10 15.500l4.500-3.200V6.500L10 9.500z" fill="#cf3329" fill-rule="evenodd"/></svg></div>
          <div class="relative"><svg viewBox="0 0 20 20"><circle cx="10" cy="10" r="10" fill="#1479cf"/><path d="M1 8C2 2 7 0 11 0c6 0 9 5 9 8s-3 5-6 4.500c-2-.5 0-1.500 0-3.500S11 5.500 8 5.500 2 7 1 8z" fill="#48cfb4"/><path d="M8 9c-2 4 1 9 8 7-3 4-8 4-11 2s-3-8 3-9z" fill="#0d4fa0"/><path d="M9 9c1-1.500 4-1 4 1s-1 2 0 3-4 0-4-4z" fill="#e8f6ff"/></svg><i class="absolute bottom-[3px] w-[5px] h-[3px] rounded bg-[#a9b1b3]"></i></div>
          <div><svg><use href="#chrome"/></svg></div>
          <div class="relative"><i class="absolute inset-x-[2px] inset-y-[3px] rounded bg-white/8"></i><svg class="relative"><use href="#chrome"/></svg><span class="absolute left-[18px] top-[6px] w-[13px] h-[13px] rounded-full bg-[#0b86d8] text-[8px] flex items-center justify-center text-white">T</span><i class="absolute bottom-[3px] w-[13px] h-[3px] rounded bg-[#3fd5f2]"></i></div>
        </div>
        <svg class="w-[9px] h-[6px] ml-[114px]" viewBox="0 0 9 6"><path d="M1 5l3.500-3.500L8 5" fill="none" stroke="#fff" stroke-width="1.500"/></svg>
      </div>

      <!-- Picture-in-picture window -->
      <div class="absolute left-[1063px] top-[512px] w-[177px] h-[186px] bg-[#101113] rounded-tl-md overflow-hidden shadow-[0_0_14px_rgba(0,0,0,0.45)] text-[#9da1a5]">
        <div class="h-[27px] bg-[#232428] flex items-center pl-[11px] text-[11.500px]"><svg class="w-[11px] h-[11px]"><use href="#tune"/></svg><span class="ml-[7px]" data-w="75">meet.google.com</span></div>
        <div class="ml-[12px] mt-px h-[26px] w-[200px] rounded bg-[#35383b] flex items-center pl-[9px] text-[11.500px] font-medium text-[#e6e8ea] font-['Roboto']"><span class="w-5 h-5 flex-none rounded-full bg-[#0b82dc] flex items-center justify-center text-[11px] mr-[6px]">T</span><span data-w="131">Teacher @Pencil Maths (You, p</span></div>
        <div class="ml-[7px] mt-[7px] w-[309px] h-[125px] bg-white rounded-t overflow-hidden font-['Roboto'] text-[3px] text-[#555]">
          <div class="h-[6px] bg-[#07212a] text-[#9fb0b4] flex items-center gap-[5px] pl-[7px] text-[3px]"><span>● Meet - nsy-rdyw</span><span>● Inbox (251)</span><span class="bg-[#243a41] px-1 h-full leading-[6px] text-white">■ Classwork for Taran</span><span>● Adam Year 3</span><span>● Students Portal</span></div>
          <div class="h-[6px] bg-[#1b3239] text-[#9fb0b4] flex items-center pl-[3px] gap-[5px]"><span>←</span><span>→</span><span>classroom.google.com/w/Nzg3MTM4MzYyMjcz</span></div>
          <div class="h-[10px] bg-[#f8fbfd] flex items-center pl-[4px] text-[5px]"><span class="mr-[3px]">≡</span><i class="w-[4px] h-[4px] bg-[#3fa53a] mr-[2px]"></i>Classroom<span class="ml-1 text-[3.500px]">› Taran</span></div>
          <div class="flex">
            <div class="w-[43px] h-[103px] bg-[#f8fbfd] pl-[4px] pt-[3px] leading-[7.300px]"><div>⌂<span class="ml-1">Home</span></div><div>▫<span class="ml-1">Calendar</span></div><div class="mt-[3px]">▪<span class="ml-1">Teaching</span></div><div>▪<span class="ml-1">To review</span></div><div>s<span class="ml-1">Sera</span></div><div>j<span class="ml-1">John</span></div><div>a<span class="ml-1">Albin, Manav</span></div><div>v<span class="ml-1">Vacation Batch - Adam</span></div><div>r<span class="ml-1">Rishaan</span></div><div>f<span class="ml-1">Feba, Saanvi</span></div><div>g<span class="ml-1">GCSE Biology 2026</span></div><div>n<span class="ml-1">Niran</span></div><div>a<span class="ml-1">Adam</span></div></div>
            <div class="flex-1 h-[103px] relative">
              <i class="absolute left-0 top-[2px] w-px h-[16px] bg-[#8b8b8b]"></i>
              <div class="h-[9px] flex items-end pl-[9px] gap-[8px] leading-[8px]"><span>Stream</span><span class="text-[#1f5fbf] border-b border-[#1f5fbf] px-[3px] leading-[6px]">Classwork</span><span>People</span><span>Grades</span></div>
              <div class="pl-[40px] text-[5px] leading-[7px] text-[#333]">Exponents and powers</div>
              <div class="pl-[40px] flex items-center h-[9px] mt-[1px]"><i class="w-[5px] h-[5px] rounded-full bg-[#0097b2] mr-[3px]"></i>Hw-11</div>
              <div class="pl-[40px] flex items-center h-[9px]"><i class="w-[5px] h-[5px] rounded-full bg-[#0097b2] mr-[3px]"></i>Hw-10</div>
              <div class="pl-[40px] text-[5px] leading-[7px] text-[#333] mt-[7px]">Cubes and cube roots</div>
              <div class="pl-[40px] flex items-center h-[9px] mt-[1px]"><i class="w-[5px] h-[5px] rounded-full bg-[#0097b2] mr-[3px]"></i>Hw-9</div>
              <div class="pl-[40px] flex items-center h-[9px]"><i class="w-[5px] h-[5px] rounded-full bg-[#0097b2] mr-[3px]"></i>Hw-8</div>
              <div class="ml-[36px] pl-[3px] flex items-center h-[9px] mt-[2px] border border-[#a5bde8]"><i class="w-[5px] h-[5px] rounded-full bg-[#0097b2] mr-[3px]"></i>Hw-7</div>
              <div class="pl-[40px] mt-[5px]">Cubes</div>
              <div class="ml-[41px] mt-[3px] w-[61px] h-[7px] bg-[#1f1f1f] flex items-center justify-end pr-[7px] text-white"><i class="w-[16px] h-[5px] rounded bg-[#a8c7fa]"></i></div>
            </div>
          </div>
        </div>
        <div class="absolute left-[7px] bottom-0 w-[170px] h-[3px] bg-[#152b2b] flex gap-[5px] pl-[56px]"><i class="w-1 bg-[#3aa7f2]"></i><i class="w-4 bg-[#2f4449]"></i><i class="w-1 bg-[#5a6ad8]"></i><i class="w-1 bg-[#fcc20e]"></i><i class="w-1 bg-[#2f74d8]"></i><i class="w-1 bg-white"></i><i class="w-1 bg-[#45b3e6]"></i><i class="w-1 bg-[#cf3329]"></i></div>
      </div>
    </section>

    <!-- Participants -->
    <section class="grid grid-cols-[306px_306px] grid-rows-[342px_342px] gap-x-[13px] gap-y-[14px] text-white font-medium text-[17.500px]">
      <div class="relative rounded-2xl flex items-center justify-center bg-[radial-gradient(circle_at_50%_50%,#0a6066_0%,#0b5358_45%,#0b3d42_100%)]">
        <span class="w-[82px] h-[82px] rounded-full bg-[#0097a7] flex items-center justify-center text-[40px] font-normal pb-[2px]">o</span>
        <span class="absolute right-[10px] top-[9px] w-[26px] h-[26px] rounded-full bg-[#09373d] flex items-center justify-center text-[#6fd3de]"><svg class="w-[18px] h-[18px]"><use href="#micoff"/></svg></span>
        <span class="absolute left-[14px] bottom-[14px]" data-w="189">obsidyne technologies</span>
      </div>
      <div class="relative rounded-2xl flex items-center justify-center bg-[radial-gradient(circle_at_50%_50%,#5c2f92_0%,#512782_45%,#3c1a66_100%)]">
        <span class="w-[82px] h-[82px] rounded-full bg-[#7e57c2] flex items-center justify-center text-[40px] font-normal">R</span>
        <span class="absolute right-[10px] top-[9px] w-[26px] h-[26px] rounded-full bg-[#35155a] flex items-center justify-center text-[#cdaaf5]"><svg class="w-[18px] h-[18px]"><use href="#micoff"/></svg></span>
        <span class="absolute left-[14px] bottom-[14px]" data-w="107">Renjith Rajan</span>
      </div>
      <div class="relative rounded-2xl flex items-center justify-center border-[3px] border-[#7cc0f8] bg-[radial-gradient(circle_at_50%_50%,#0b5c8a_0%,#094c74_45%,#06304b_100%)]">
        <span class="w-[110px] h-[110px] rounded-full bg-[#236a95] flex items-center justify-center"><span class="w-[87px] h-[87px] rounded-full bg-[#0288d1] border-[3px] border-[#7cc0f8] flex items-center justify-center text-[40px] font-normal">T</span></span>
        <span class="absolute left-[11px] bottom-[11px]" data-w="192">Teacher @Pencil Maths</span>
      </div>
      <div class="relative rounded-2xl flex items-center justify-center bg-[radial-gradient(circle_at_50%_50%,#0a6066_0%,#0b5358_45%,#0b3d42_100%)]">
        <span class="w-[82px] h-[82px] rounded-full bg-[#0097a7] flex items-center justify-center text-[40px] font-normal">N</span>
        <span class="absolute right-[10px] top-[9px] w-[26px] h-[26px] rounded-full bg-[#09373d] flex items-center justify-center text-[#6fd3de]"><svg class="w-[18px] h-[18px]"><use href="#micoff"/></svg></span>
        <span class="absolute left-[14px] bottom-[14px]" data-w="166">Navadeep Satheesh</span>
      </div>
    </section>
  </div>
</main>

<!-- Call controls -->
<div class="h-[90px] flex items-center font-['Roboto','Noto_Sans',sans-serif] text-[#e3e3e3]">
  <div class="w-[643px] flex items-center pl-[27px] font-medium text-[18px] text-white"><span data-w="68">6:53 PM</span><i class="w-px h-[18px] bg-[#c4c7c5] mx-[14px]"></i><span data-w="109">nsy-rdyw-qij</span></div>
  <div class="flex gap-[9px]">
    <div class="w-[99px] h-[54px] rounded-2xl bg-[#601410] flex items-center text-[#f9dedc]"><svg class="w-[12px] h-[8px] ml-[20px]" viewBox="0 0 12 8"><path d="M1 7l5-5 5 5" fill="none" stroke="currentColor" stroke-width="2"/></svg><span class="ml-auto w-[54px] h-[54px] rounded-2xl bg-[#e5cdcb] text-[#601410] flex items-center justify-center"><svg class="w-[25px] h-[25px]"><use href="#micoff"/></svg></span></div>
    <div class="w-[99px] h-[54px] rounded-2xl bg-[#601410] flex items-center text-[#f9dedc]"><svg class="w-[12px] h-[8px] ml-[20px]" viewBox="0 0 12 8"><path d="M1 7l5-5 5 5" fill="none" stroke="currentColor" stroke-width="2"/></svg><span class="ml-auto w-[54px] h-[54px] rounded-2xl bg-[#f9dedc] text-[#601410] flex items-center justify-center"><svg class="w-6 h-6" viewBox="0 0 24 24"><path d="M9 4h9v8.500M17.500 20H3V4l1 0M1.500 1l21 22" fill="none" stroke="currentColor" stroke-width="2"/><path d="M18 11.500 23 7v10.500L18 13z" fill="currentColor"/></svg></span></div>
    <span class="w-[63px] h-[54px] rounded-[27px] bg-[#333537] flex items-center justify-center"><svg class="w-[27px] h-[22px]" viewBox="0 0 27 22"><path d="M3.500 1.500h20v15h-20z" fill="none" stroke="currentColor" stroke-width="2.400" stroke-linejoin="round"/><path d="M0 18.500h27V21H0zM13.500 4l5 5.300h-3.500V14h-3V9.300H8.500z" fill="currentColor"/></svg></span>
    <span class="w-[63px] h-[54px] rounded-[27px] bg-[#333537] flex items-center justify-center"><svg class="w-6 h-6" viewBox="0 0 24 24"><circle cx="12" cy="12" r="10.500" fill="none" stroke="currentColor" stroke-width="2.300"/><circle cx="8.300" cy="9" r="1.800" fill="currentColor"/><circle cx="15.700" cy="9" r="1.800" fill="currentColor"/><path d="M6 13h12c-.5 6-11.500 6-12 0z" fill="currentColor"/></svg></span>
    <span class="w-[63px] h-[54px] rounded-[27px] bg-[#333537] flex items-center justify-center"><svg class="w-[22px] h-[20px]" viewBox="0 0 22 20"><rect x="1.500" y="1.500" width="19" height="16.500" rx="1.500" fill="none" stroke="currentColor" stroke-width="2.400"/><path d="M9.500 8.500V7H5v6h4.500v-1.500M17 8.500V7h-4.500v6H17v-1.500" fill="none" stroke="currentColor" stroke-width="1.800"/></svg></span>
    <span class="w-[63px] h-[54px] rounded-[27px] bg-[#333537] flex items-center justify-center"><svg class="w-[25px] h-[26px]" viewBox="0 0 24 25"><path d="M8.300 12V4.500M12 11.500V2.200M15.700 11.500V3.500M19.500 12V6" stroke="currentColor" stroke-width="2.300" stroke-linecap="round"/><path d="M8.300 6v10L4 12.700c-1.200-.7-2.400.5-1.700 1.600l5.200 7.200C8.500 23 10 24 12 24h1.500c3.500 0 6-2.500 6-6V10" fill="none" stroke="currentColor" stroke-width="2.200" stroke-linejoin="round"/></svg></span>
    <span class="w-[41px] h-[54px] rounded-[20.500px] bg-[#333537] flex items-center justify-center"><svg class="w-[6.500px] h-[20px]"><use href="#dots"/></svg></span>
    <span class="w-[81px] h-[54px] rounded-[27px] bg-[#dc362e] flex items-center justify-center text-white ml-[-1px]"><svg class="w-[26px] h-[12px]" viewBox="0 0 26 12"><path d="M2 7.500C8 .5 18 .5 24 7.500L21.500 10 18 8V4.500M8 4.500V8L4.500 10 2 7.500" fill="none" stroke="currentColor" stroke-width="2.300" stroke-linejoin="round"/></svg></span>
  </div>
  <div class="ml-auto mr-[13px] flex text-white">
    <span class="w-[54px] flex justify-center"><svg class="w-6 h-6" viewBox="0 0 24 24"><circle cx="12" cy="12" r="10.300" fill="none" stroke="currentColor" stroke-width="2.200"/><path d="M10.900 10.500h2.200V17.500h-2.200zM10.900 6.500h2.200v2.300h-2.200z" fill="currentColor"/></svg></span>
    <span class="w-[54px] flex justify-center relative"><svg class="w-[26px] h-6" viewBox="0 0 26 24"><circle cx="9.500" cy="8" r="3.800" fill="none" stroke="currentColor" stroke-width="2.300"/><path d="M1.700 20.500v-2c0-3.200 4.500-4.500 7.800-4.500s7.800 1.300 7.800 4.500v2z" fill="none" stroke="currentColor" stroke-width="2.300"/><path d="M14 3.200a5 5 0 1 1 0 9.600c2-2.500 2-7 0-9.600zM18.500 14c4 .5 7 2 7 4.800v3H20v-3c0-2-.4-3.500-1.500-4.800z" fill="currentColor"/></svg><span class="absolute left-[28px] -top-[26px] w-[23px] h-[23px] rounded-full bg-[#5f6368] text-[13px] font-medium flex items-center justify-center">5</span></span>
    <span class="w-[54px] flex justify-center"><svg class="w-6 h-6" viewBox="0 0 24 24"><path d="M1.200 22V2.200h21.600v16H5z" fill="none" stroke="currentColor" stroke-width="2.200" stroke-linejoin="round"/><path d="M5 6.800h14M5 10.400h14M5 14h9" stroke="currentColor" stroke-width="2"/></svg></span>
    <span class="w-[54px] flex justify-center"><svg class="w-5 h-6"><use href="#grid9"/></svg></span>
  </div>
</div>

<!-- Desktop behind the browser and its taskbar -->
<footer class="relative h-[60px] border-t border-[#454545] bg-[#1a1a1a] flex text-[14.500px] text-[#e6e6e6] overflow-hidden">
  <div class="w-[73px] flex-none bg-linear-to-br from-[#160f14] via-[#1a1014] to-[#2a1512]"></div>
  <div class="w-[198px] border-x border-[#383838] overflow-hidden flex-none">
    <div class="flex items-center h-[20px] pl-[15px]"><svg class="w-[11px] h-[8px]" viewBox="0 0 11 8"><path d="M1 1.500l4.500 4.500L10 1.500" fill="none" stroke="#cfcfcf" stroke-width="1.600"/></svg><svg class="w-[18px] h-[16px] ml-[17px]" viewBox="0 0 18 16"><defs><linearGradient id="pc" x1="0" y1="0" x2="1" y2="1"><stop stop-color="#45dfe4"/><stop offset="1" stop-color="#0c62b8"/></linearGradient></defs><rect width="18" height="13" rx="1" fill="url(#pc)"/><path d="M7 13h4v1.500h2V16H5v-1.500h2z" fill="#b5bcc2"/></svg><span class="ml-[6px]" data-w="47">This PC</span></div>
    <div class="flex items-center h-[20px] mt-[20px] pl-[27px]"><svg class="w-[8px] h-[11px] flex-none" viewBox="0 0 8 11"><path d="M1.500 1l4.500 4.500L1.500 10" fill="none" stroke="#808080" stroke-width="1.600"/></svg><svg class="w-[18px] h-[18px] ml-[18px] -mt-[3px] flex-none" viewBox="0 0 18 18"><path d="M0 0h3v3H0zM3.700 0h3v3h-3zM0 3.700h3v3H0zM3.700 3.700h3v3h-3z" fill="#2a9df0"/><path d="M4 6h10l4 5.500H0L2 8h2z" fill="#e4e4e4"/><path d="M0 11h18v7H0z" fill="#6b6b6b"/><path d="M2 13.500h2v2H2z" fill="#31e031"/></svg><span class="ml-[5px]" data-w="120">Windows-SSD (C:)</span></div>
  </div>
  <div class="ml-[26px] w-[120px] text-center -mt-[8px] leading-5 flex-none"><span class="inline-block" data-w="98">OfferLetter.pdf</span></div>
  <div class="ml-[26px] w-[120px] text-center -mt-[8px] leading-5 flex-none"><span class="inline-block" data-w="110">C4Y_PowerPoint_</span><br><span class="inline-block" data-w="108">Final_Nov2020.p</span><br><span class="inline-block" data-w="21">ptx</span></div>
  <div class="ml-[11.400px] flex flex-none [&>div]:w-[55.200px] [&>div]:h-[59px] [&>div]:flex [&>div]:items-center [&>div]:justify-center [&>div]:relative [&_svg]:w-[30px] [&_svg]:h-[30px] [&_svg]:overflow-visible [&_i]:absolute [&_i]:bottom-[5px] [&_i]:h-[4px] [&_i]:rounded-full [&_i]:bg-[#9c9c9c]">
    <div><svg><use href="#win"/></svg></div>
    <div><svg><use href="#folder"/></svg><i class="w-[8px]"></i></div>
    <div><svg viewBox="0 0 30 30"><circle cx="15" cy="15" r="15" fill="#1ed760"/><path d="M6 10.500c6.500-1.800 13-1.200 18.500 2M7 15.500c5.500-1.500 11-1 15.500 1.700M8 20.200c4.500-1.200 9-.7 12.700 1.400" fill="none" stroke="#151515" stroke-width="2.500" stroke-linecap="round"/></svg></div>
    <div><svg viewBox="0 0 30 30"><rect y="3.500" width="30" height="23" rx="1.500" fill="#454545"/><path d="M0 4h10v4H0z" fill="#d8d8d8"/><path d="M10 4h10v4H10z" fill="#9a9a9a"/><path d="M20 4h10v4H20z" fill="#777"/><path d="M4.500 12l5.500 5-5.500 5M14 22h9" fill="none" stroke="#e8e8e8" stroke-width="2.600"/></svg></div>
    <div><svg viewBox="0 0 30 30"><path d="M15 0l5 3 1 9 4 6-3 6-3 4-7-3-7-3 2-8 1-8z" fill="#7c4ddb"/><path d="M15 0l-7 6-1 8 5 6 3-9z" fill="#b9a4f5"/><path d="M15 0l-2 16 7 3 5-1-4-6-1-9z" fill="#8f6cec"/><path d="M7 14l6 6 7-1-1 9-7-3-7-3z" fill="#5b27b8"/></svg></div>
    <div><svg viewBox="0 0 30 30"><circle cx="15" cy="15" r="15" fill="#5865f2"/><path d="M11 8.500c-1.500.3-3 .8-3.800 1.300C5.300 13 4.800 16.500 5 20c1.500 1.200 3 1.800 4.300 2l1-2c3 1 6.400 1 9.400 0l1 2c1.500-.3 3-.9 4.300-2 .3-3.500-.5-7-2.200-10.200-1-.6-2.300-1-3.800-1.300l-.7 1.300h-6.600z" fill="#fff"/><ellipse cx="11.700" cy="15.700" rx="1.800" ry="2" fill="#5865f2"/><ellipse cx="18.300" cy="15.700" rx="1.800" ry="2" fill="#5865f2"/></svg></div>
    <div><svg viewBox="0 0 30 30"><rect width="30" height="30" rx="3" fill="#202020"/><path d="M15 5h-3.500a3.300 3.300 0 0 0 0 6.700H15z" fill="#f24e1e"/><path d="M15 5h3.500a3.300 3.300 0 0 1 0 6.700H15z" fill="#ff7262"/><path d="M15 11.700h-3.500a3.300 3.300 0 0 0 0 6.700H15z" fill="#a259ff"/><circle cx="18.400" cy="15" r="3.300" fill="#1abcfe"/><path d="M15 18.400h-3.500a3.300 3.300 0 1 0 3.500 3.300z" fill="#0acf83"/></svg></div>
    <div><span class="absolute inset-x-[2.500px] top-[4px] bottom-[5px] rounded-md bg-[#2b2b2b] border border-[#353535]"></span><svg class="relative"><use href="#chrome"/></svg><span class="absolute left-[28px] top-[8px] w-[20px] h-[20px] rounded-full bg-[#0097a7] text-[10.500px] text-[#bfeef2] flex items-center justify-center font-['Roboto']">N</span><i class="w-[20px]"></i></div>
    <div><svg viewBox="0 0 30 30"><path d="M0 0h30v30H0z" fill="#1d3fa8"/><path d="M13 6v16h9" fill="none" stroke="#0f2358" stroke-width="5"/><path d="M12.500 5v16h9" fill="none" stroke="#fff" stroke-width="4.500"/></svg></div>
    <div><svg viewBox="0 0 30 30"><path d="M22 0l8 3.500v23L22 30 2.500 11.500 0 9l2.500-2L22 22z" fill="#1283cf"/><path d="M22 0v8L2.500 23.500 0 21z" fill="#0f74bd"/><path d="M22 0l8 3.500v23L22 30z" fill="#29a6f0"/></svg><i class="w-[8px]"></i></div>
    <div><svg><use href="#chrome"/></svg><span class="absolute left-[28px] top-[8px] w-[20px] h-[20px] rounded-full bg-[#0097a7] text-[11px] text-[#bfeef2] flex items-center justify-center font-['Roboto']">o</span><i class="w-[8px]"></i></div>
    <div><svg viewBox="0 0 30 30"><circle cx="15.500" cy="15" r="14.500" fill="#e0593a"/><path d="M15.500.5A14.500 14.500 0 0 1 30 15H15.500z" fill="#ff9a72"/><rect x="0" y="7" width="16" height="16" rx="1.500" fill="#c13b1b"/><text x="8" y="19.500" text-anchor="middle" font-size="12.500" font-weight="700" fill="#fff">P</text></svg><i class="w-[8px]"></i></div>
    <div><svg viewBox="0 0 30 30"><defs><linearGradient id="ph" x1="0" y1="0" x2="1" y2="1"><stop stop-color="#1372c8"/><stop offset="1" stop-color="#8350a8"/></linearGradient></defs><rect x="2" y="1" width="26" height="28" rx="3" fill="url(#ph)"/><path d="M2 24 15 11l13 13v3a2 2 0 0 1-2 2H4a2 2 0 0 1-2-2z" fill="#2cc0f7"/><path d="M2 24 13 13l4 3L5 29H4a2 2 0 0 1-2-2z" fill="#7fe0fb"/><circle cx="21.500" cy="6" r="2.700" fill="#eef"/></svg><i class="w-[8px]"></i></div>
    <div><svg viewBox="0 0 30 30"><path d="M4 2h22v26H4z" fill="#58c5e2"/><path d="M4 27h22v2.500H4z" fill="#a3500f"/><path d="M4 26h22v1.500H4z" fill="#eee"/><path d="M8 9h14M8 14h14M8 19h14" stroke="#0a6d96" stroke-width="2"/><path d="M7 0v3M12 0v3M17 0v3M22 0v3" stroke="#0a6d96" stroke-width="2.500"/></svg><i class="w-[8px]"></i></div>
  </div>
  <svg class="w-[15px] h-[10px] absolute left-[1586px] top-[24px]" viewBox="0 0 15 10"><path d="M1.500 8.500l6-6 6 6" fill="none" stroke="#fff" stroke-width="2"/></svg>
  <div class="ml-auto w-[284px] bg-white flex-none"></div>
  <svg class="absolute left-[1626px] top-[18px] w-[14px] h-[21px]" viewBox="0 0 14 21"><g fill="none" stroke="#858585" stroke-width="1.400"><rect x="4.200" y="1" width="5.600" height="12" rx="2.800"/><path d="M1 9.500a6 6 0 0 0 12 0M7 16v4"/></g></svg>
</footer>

<script>
  // Remaining browser tabs: icon markup and the visible part of the page title
  var globe = '<svg class="w-5 h-5 text-[#9aa0a6]"><use href="#globe"/></svg>';
  var yt = '<svg class="w-5 h-5"><use href="#yt"/></svg>';
  var tabs = [
    [globe, 'lett'],
    ['<svg class="w-5 h-5" viewBox="0 0 20 20"><rect width="20" height="20" rx="3" fill="#fff"/><path d="M5.500 8.500 10 4.500l4.500 4" fill="none" stroke="#f3477d" stroke-width="2.400"/><path d="M10 4.500l4.500 4" fill="none" stroke="#ffb52e" stroke-width="2.400"/><path d="M5 13.300c3 3.600 7 3.600 10 0" fill="none" stroke="#5a6bf5" stroke-width="2.400"/></svg>', 'Un'],
    [globe, 'VIS'],
    [globe, 'alli'],
    ['<svg class="w-5 h-[17px]"><use href="#gmeet"/></svg>', 'Go'],
    ['<svg class="w-5 h-5" viewBox="0 0 20 20"><path d="M0 0h20v20H0z" fill="#2324d4"/><circle cx="9.500" cy="10.500" r="4.200" fill="none" stroke="#fff" stroke-width="2.600"/><path d="M14.500 5v11.500" stroke="#fff" stroke-width="2.600"/><circle cx="9.500" cy="10.500" r="1.300" fill="#2bc8f0"/></svg>', 'Car'],
    ['<svg class="w-5 h-5" viewBox="0 0 20 20"><rect width="20" height="20" rx="2" fill="#4285f4"/><path d="M4 4.500h12M4 8h12M4 11.500h12M4 15h8" stroke="#fff" stroke-width="1.700"/></svg>', 'Un'],
    [globe, 'Off'],
    ['<svg class="w-5 h-5" viewBox="0 0 20 20"><defs><linearGradient id="vt" x1="0" y1="0" x2="1" y2="1"><stop stop-color="#41d1ff"/><stop offset="1" stop-color="#bd34fe"/></linearGradient></defs><path d="M0 2.500l10 17.500L20 2.500 10 4.300z" fill="url(#vt)"/><path d="M14.500 0L8 1.300 7.300 9.300l2.300-.4-.8 4L15 6l-2.400.4z" fill="#ffd028"/></svg>', 'Vis'],
    ['<svg class="w-5 h-5" viewBox="0 0 20 20"><path d="M1 1h18v18H1zM5 5h10v10H5zM1 1l4 4M19 1l-4 4M1 19l4-4M19 19l-4-4" fill="none" stroke="#2c1152" stroke-width="1.500"/></svg>', 'Ob'],
    [globe, 'bro'],
    ['<svg class="w-5 h-5" viewBox="0 0 20 20"><path d="M0 0h20v20H0z" fill="#5f01d1"/><text x="9" y="14" text-anchor="middle" font-size="13" font-weight="800" fill="#fff">y<tspan font-style="italic">!</tspan></text></svg>', 'goo'],
    ['<svg class="w-5 h-5" viewBox="0 0 20 20"><circle cx="10" cy="10" r="10" fill="#fff"/><g fill="none" stroke-width="2.600"><path d="M14 6.300A5.300 5.300 0 0 0 5.300 7.600" stroke="#ea4335"/><path d="M5.300 7.600a5.300 5.300 0 0 0 0 4.800" stroke="#fbbc04"/><path d="M5.300 12.400a5.300 5.300 0 0 0 8.300 1.700" stroke="#34a853"/><path d="M13.600 14.100A5 5 0 0 0 15.300 10.200H10" stroke="#4285f4"/></g></svg>', 'wh'],
    ['<svg class="w-5 h-5" viewBox="0 0 20 20"><rect width="20" height="20" rx="3" fill="#33363a"/><text x="10" y="14" text-anchor="middle" font-size="11.500" font-weight="700" fill="#d9b012">mt</text></svg>', 'Mo'],
    [globe, 'sha'],
    [yt, '(50'],
    ['<svg class="w-5 h-5" viewBox="0 0 20 20"><rect width="20" height="20" rx="2" fill="#fff"/><text x="10" y="13.500" text-anchor="middle" font-size="17" font-weight="800" fill="#111">a</text><path d="M3.500 15.500c4 3 9 3 13 .3" fill="none" stroke="#ff9900" stroke-width="1.700"/></svg>', 'Am'],
    [yt, '(50']
  ];
  document.getElementById('tabs').insertAdjacentHTML('beforeend', tabs.map(function (t) {
    return '<div class="w-[77.500px] flex-none flex items-center pl-[13px] relative"><span class="w-5 mr-[9px] flex-none">' + t[0] +
      '</span><span class="w-[21px] overflow-hidden leading-6 tracking-[-0.300px] [mask-image:linear-gradient(90deg,#000_60%,transparent)]">' + t[1] +
      '</span><i class="absolute right-0 top-[15px] w-0.5 h-5 bg-[#454746]"></i></div>';
  }).join(''));

  // Class list of the sidebar: initial, badge colours, name, section, name width
  var classes = [
    ['S', 'bg-[#e6eefb] text-[#2868c8]', 'Sera', 'Year 5', 24],
    ['J', 'bg-[#fdeedd] text-[#c07018]', 'John', 'GCSE', 26],
    ['A', 'bg-[#f0f2f3] text-[#26282a]', 'Albin, Manav', '', 68],
    ['V', 'bg-[#e6eefb] text-[#2868c8]', 'Vacation Batch - Adam, Sera', '', 152],
    ['R', 'bg-[#f0f2f3] text-[#26282a]', 'Rishaan', 'Class 3', 42],
    ['F', 'bg-[#e6eefb] text-[#2868c8]', 'Feba, Saanvi', 'GCSE', 67],
    ['G', 'bg-[#e2f4f6] text-[#12808c]', 'GCSE Biology 2026', '', 102],
    ['N', 'bg-[#e1f2e6] text-[#186f3a]', 'Niran', 'Class 2', 28],
    ['A', 'bg-[#e6eefb] text-[#2868c8]', 'Adam', 'Year 3', 30],
    ['', '', 'Nivedh', 'Class 4', 34]
  ];
  document.getElementById('classes').innerHTML = classes.map(function (c) {
    return '<div class="h-[38.850px] flex items-center pl-[20px]"><span class="w-[20px] h-[20px] rounded-full flex items-center justify-center text-[13px] ' + c[1] + '">' + c[0] +
      '</span><div class="ml-4 flex flex-col gap-[4px]"><span class="w-max" data-w="' + c[4] + '">' + c[2] + '</span>' +
      (c[3] ? '<span class="w-max text-[9.500px] text-[#5f6368]">' + c[3] + '</span>' : '') + '</div></div>';
  }).join('');

  function fitLabels() {
    document.querySelectorAll('[data-w]').forEach(function (el) {
      el.classList.add('flex-none');
      el.style.letterSpacing = '0px';
      var n = el.textContent.length, w = el.getBoundingClientRect().width;
      el.style.letterSpacing = ((+el.dataset.w - w) / n).toFixed(3) + 'px';
    });
  }
  fitLabels();
  window.addEventListener('load', fitLabels);
  document.fonts.ready.then(fitLabels);
  setTimeout(fitLabels, 100);
</script>
</body>
</html>
